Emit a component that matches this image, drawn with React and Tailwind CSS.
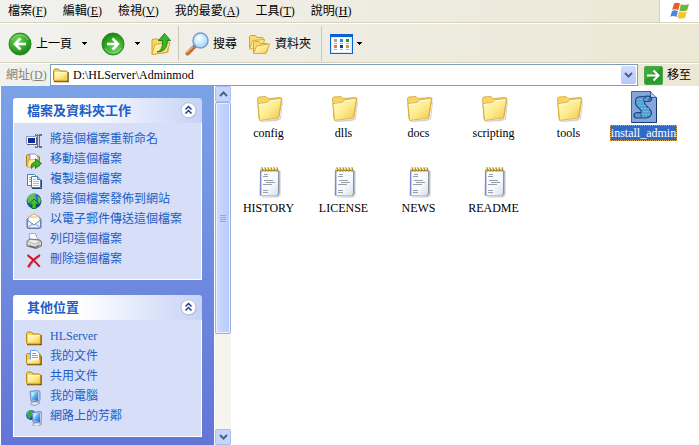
import { useState } from 'react';

const MENUS = [
  { label: '檔案', accel: 'F' },
  { label: '編輯', accel: 'E' },
  { label: '檢視', accel: 'V' },
  { label: '我的最愛', accel: 'A' },
  { label: '工具', accel: 'T' },
  { label: '說明', accel: 'H' },
];

const TASKS = [
  { label: '將這個檔案重新命名', Icon: RenameIcon },
  { label: '移動這個檔案', Icon: MoveIcon },
  { label: '複製這個檔案', Icon: CopyIcon },
  { label: '將這個檔案發佈到網站', Icon: PublishIcon },
  { label: '以電子郵件傳送這個檔案', Icon: MailIcon },
  { label: '列印這個檔案', Icon: PrintIcon },
  { label: '刪除這個檔案', Icon: DeleteIcon },
];

const PLACES = [
  { label: 'HLServer', Icon: SmallFolder },
  { label: '我的文件', Icon: DocumentsIcon },
  { label: '共用文件', Icon: SmallFolder },
  { label: '我的電腦', Icon: ComputerIcon },
  { label: '網路上的芳鄰', Icon: NetworkIcon },
];

const FILES = [
  { name: 'config', Icon: BigFolder },
  { name: 'dlls', Icon: BigFolder },
  { name: 'docs', Icon: BigFolder },
  { name: 'scripting', Icon: BigFolder },
  { name: 'tools', Icon: BigFolder },
  { name: 'install_admin', Icon: ScriptIcon },
  { name: 'HISTORY', Icon: TextIcon },
  { name: 'LICENSE', Icon: TextIcon },
  { name: 'NEWS', Icon: TextIcon },
  { name: 'README', Icon: TextIcon },
];

/* Shared gradients, referenced by id from the icons */
function Gradients() {
  return (
    <svg className="absolute h-0 w-0" aria-hidden="true">
      <defs>
        <radialGradient id="green" cx="40%" cy="30%" r="70%">
          <stop offset="0" stopColor="#6fd45c" />
          <stop offset="0.6" stopColor="#35ab28" />
          <stop offset="1" stopColor="#1c8418" />
        </radialGradient>
        <linearGradient id="folder" x1="0" y1="0" x2="1" y2="1">
          <stop offset="0" stopColor="#fffbc4" />
          <stop offset="0.5" stopColor="#fdec90" />
          <stop offset="1" stopColor="#f0c44a" />
        </linearGradient>
        <linearGradient id="screen" x1="0" y1="0" x2="1" y2="1">
          <stop offset="0" stopColor="#c8f0ff" />
          <stop offset="0.5" stopColor="#5cb4f4" />
          <stop offset="1" stopColor="#1c60cc" />
        </linearGradient>
        <radialGradient id="lens" cx="40%" cy="35%" r="65%">
          <stop offset="0" stopColor="#ffffff" />
          <stop offset="0.6" stopColor="#c6e9fb" />
          <stop offset="1" stopColor="#8ccaf2" />
        </radialGradient>
        <radialGradient id="globe" cx="35%" cy="30%" r="70%">
          <stop offset="0" stopColor="#8ed2ff" />
          <stop offset="0.5" stopColor="#2a72dc" />
          <stop offset="1" stopColor="#123a90" />
        </radialGradient>
        <linearGradient id="paper" x1="0" y1="0" x2="1" y2="1">
          <stop offset="0" stopColor="#ffffff" />
          <stop offset="0.6" stopColor="#f6f9fd" />
          <stop offset="1" stopColor="#cfdcec" />
        </linearGradient>
      </defs>
    </svg>
  );
}

function ArrowCircle({ flip }) {
  return (
    <svg width="24" height="24" viewBox="0 0 24 24" className={flip ? 'rotate-180' : ''}>
      <circle cx="12" cy="12" r="11" fill="url(#green)" stroke="#2b8a24" strokeWidth="1" />
      <path d="M4 8a9 9 0 0 1 16 0" fill="none" stroke="#9be58a" strokeWidth="1" opacity="0.7" />
      <path d="M12.500 6.500 7 12l5.500 5.500M7.500 12H18" fill="none" stroke="#fff" strokeWidth="2.600" />
    </svg>
  );
}

function UpFolderIcon() {
  return (
    <svg width="22" height="24" viewBox="0 0 22 24">
      <path d="M2 22.500V8l1-1h5l1.500 2H18v11Z" fill="#f7d965" stroke="#d2a02c" />
      <path d="m2 22.500 3-10 15-2-3 10Z" fill="url(#folder)" stroke="#d9a938" />
      <path d="M7 20c4-1 6-5 5.500-11.500H8.500L14.500 1.500l6 7h-3.500C18 15 14 20 7 20Z" fill="#3cb52e" stroke="#23801d" />
    </svg>
  );
}

function SearchIcon() {
  return (
    <svg width="24" height="24" viewBox="0 0 24 24">
      <path d="m2.500 21.500 7-7" stroke="#c06c34" strokeWidth="4" strokeLinecap="round" />
      <path d="m2 20.500 6.500-6.500" stroke="#f2ac74" strokeWidth="1.500" strokeLinecap="round" />
      <path d="m8.500 15.500 2-2" stroke="#6e7fa8" strokeWidth="3" />
      <circle cx="15.500" cy="8.500" r="7.500" fill="url(#lens)" stroke="#7b9bd8" strokeWidth="1.500" />
      <circle cx="15.500" cy="8.500" r="6" fill="none" stroke="#bfe3fa" />
    </svg>
  );
}

function FoldersIcon() {
  return (
    <svg width="24" height="24" viewBox="0 0 24 24">
      <path d="M2.500 16V4.500l1-1h5l1.500 2h6V15Z" fill="#f9dd72" stroke="#d8a232" />
      <path d="m2.500 17 3-8.500 12-1-2 9Z" fill="url(#folder)" stroke="#dba83a" />
      <path d="M6.500 21V10.500l1-1h4l1.500 2h7V20Z" fill="#f9dd72" stroke="#d8a232" />
      <path d="m6.500 21.500 3-7.500 13-2-3.500 9.500Z" fill="url(#folder)" stroke="#dba83a" />
    </svg>
  );
}

function ViewsIcon() {
  return (
    <svg width="23" height="20" viewBox="0 0 23 20" shapeRendering="crispEdges">
      <rect width="23" height="20" rx="1" fill="#0b62cf" />
      <rect x="1" y="3" width="21" height="16" fill="#d9edff" />
      <rect x="2" y="4" width="18" height="14" fill="#fff" />
      <path fill="#a4a0cc" d="M4 5h3v3H4z" />
      <path fill="#2a80e0" d="M10 5h3v3h-3z" />
      <path fill="#1c9c20" d="M16 5h3v3h-3z" />
      <path fill="#f07448" d="M4 11h3v3H4z" />
      <path fill="#0c3ca0" d="M10 11h3v3h-3z" />
      <path fill="#d0a020" d="M16 11h3v3h-3z" />
      <path d="M4 9.500h3m3 0h3m3 0h3M4 15.500h3m3 0h3m3 0h3" stroke="#b4b4b4" />
    </svg>
  );
}

function DropArrow() {
  return (
    <svg width="5" height="3" viewBox="0 0 5 3" shapeRendering="crispEdges">
      <path d="M0 0h5v1H4v1H3v1H2V2H1V1H0Z" fill="#000" />
    </svg>
  );
}

function WindowsFlag() {
  return (
    <svg width="20" height="18" viewBox="0 0 20 18">
      <path d="M4 1.500C6 .3 8 .5 10 1.600L8.300 8C6.500 7 4.300 6.800 2.200 8Z" fill="#ea5a2c" />
      <path d="M11 2c2 1.200 5 1.200 8 0l-1.800 6.300c-2.600 1.400-5.200 1.300-7.900.1Z" fill="#6fb53c" />
      <path d="M2 9c2.200-1.200 4.300-1 6 0l-1.600 6c-2-1.200-4-1.200-6.100-.2Z" fill="#4a87dc" />
      <path d="M9 9.300c2.700 1.300 5.300 1.300 7.900.1l-1.700 6c-2.600 1.700-5.200 1.500-7.800 0Z" fill="#f8c430" />
    </svg>
  );
}

function GoIcon() {
  return (
    <svg width="19" height="19" viewBox="0 0 19 19">
      <rect x=".5" y=".5" width="18" height="18" rx="1.500" fill="#2b9c2b" stroke="#47a847" />
      <path d="M1 1h17L1 14Z" fill="#50b64b" opacity=".5" />
      <path d="M3 9.500h11M9.500 4.500l5 5-5 5" fill="none" stroke="#fff" strokeWidth="2" />
    </svg>
  );
}

function Chevron({ up }) {
  return (
    <svg width="9" height="6" viewBox="0 0 9 6" className={up ? 'rotate-180' : ''}>
      <path d="m1 1 3.500 3.500L8 1" fill="none" stroke="#4d6185" strokeWidth="2" />
    </svg>
  );
}

function CollapseIcon() {
  return (
    <svg width="17" height="17" viewBox="0 0 17 17">
      <circle cx="9" cy="9" r="7.500" fill="#9aa9cc" opacity=".6" />
      <circle cx="8.500" cy="8.200" r="7.500" fill="#fff" stroke="#b4bfdc" />
      <path d="m5.500 7.500 3-3 3 3M5.500 11.500l3-3 3 3" fill="none" stroke="#223c86" strokeWidth="1.500" />
    </svg>
  );
}

function SmallFolder() {
  return (
    <svg width="16" height="16" viewBox="0 0 16 16">
      <path d="M1 14.500h14V5" fill="none" stroke="#6a4c08" strokeWidth="1.500" />
      <path d="M.500 13V3.500l1-1.500h4l1.500 2h6.500l1 1v8l-1 1h-12Z" fill="#f6d35e" stroke="#c08a18" />
      <path d="M2 6h11.500v6.500H2Z" fill="url(#folder)" />
      <path d="M2 5.500h11.500" stroke="#fffbd0" />
    </svg>
  );
}

function DocumentsIcon() {
  return (
    <svg width="16" height="16" viewBox="0 0 16 16">
      <path d="M1 14.500h14V6" fill="none" stroke="#6a4c08" strokeWidth="1.500" />
      <path d="M.500 13V4.500l1-1h12l1 1.500v8l-1 1h-12Z" fill="#f3cb54" stroke="#bd8715" />
      <path d="M4.500 11V.500h6l3 3V11Z" fill="#fff" stroke="#6ba5d4" />
      <path d="M6 3.500h4M6 5.500h6M6 7.500h6" stroke="#64b2ea" />
      <path d="M1.500 9.500h12v4h-12Z" fill="url(#folder)" />
    </svg>
  );
}

function Monitor() {
  return (
    <>
      <path d="M5 12.500 11 11l3 2-5 2.500-4-1Z" fill="#e4e5ee" stroke="#8b8fa8" strokeWidth=".8" />
      <path d="M4 1.500 12 .500l2 1v9l-2 1.500-7-1Z" fill="#b9c6e6" stroke="#6078b4" strokeWidth=".8" />
      <path d="m5 2.500 7-1v9.400l-6-1Z" fill="url(#screen)" />
      <path d="m5.600 3 4-.7-3.500 5Z" fill="#fff" opacity=".5" />
    </>
  );
}

function ComputerIcon() {
  return (
    <svg width="16" height="16" viewBox="0 0 16 16">
      <Monitor />
    </svg>
  );
}

function NetworkIcon() {
  return (
    <svg width="16" height="16" viewBox="0 0 16 16">
      <circle cx="5" cy="5" r="5" fill="url(#globe)" />
      <path d="M1 3c2-3 5-3 6-2L5 3l1 2-3 4C1 7 2 5 1 3Z" fill="#3aae34" />
      <g transform="translate(2 1)">
        <Monitor />
      </g>
    </svg>
  );
}

function RenameIcon() {
  return (
    <svg width="16" height="16" viewBox="0 0 16 16" shapeRendering="crispEdges">
      <path d="M1 4h10v8H1z" fill="#596071" />
      <path d="M0 3h10v8H0z" fill="#8f98ac" />
      <path d="M1 4h9v7H1z" fill="#f6f8ff" />
      <path d="M2 5h7v5H2z" fill="#0a2da4" />
      <path d="M9 1h3v1h1V1h3v2h-2v10h2v2h-3v-1h-1v1H9v-2h2V3H9Z" fill="#697186" />
      <path d="M12 3h1v10h-1zM10 1h1v1h-1zM10 13h1v1h-1z" fill="#cbd3e5" />
    </svg>
  );
}

function MoveIcon() {
  return (
    <svg width="16" height="16" viewBox="0 0 16 16">
      <path d="M.500 13V2.500l1-1h4l1 1.500h6l1 1v9Z" fill="#edc14e" stroke="#ab7a1c" />
      <path d="M4 7V1h5l3 3v5L5 10Z" fill="#fff" stroke="#879cc0" />
      <path d="m1 14 2-7 9-1-1 8Z" fill="url(#folder)" stroke="#c0902c" strokeWidth=".6" />
      <path d="M5.500 15.500c-1-4 1-6.500 4-6.500V6l6 4.500-6 5v-3c-2 0-3 1-4 3Z" fill="#35b52c" stroke="#17701a" strokeWidth=".8" />
    </svg>
  );
}

function CopyIcon() {
  return (
    <svg width="16" height="16" viewBox="0 0 16 16">
      <path d="M1.500 12.500V1.500h7l2 2v9Z" fill="#fff" stroke="#4981b0" />
      <path d="M3 4.500h3M3 6.500h2M3 8.500h2" stroke="#77b5df" />
      <path d="M15.500 7v8.500H6" fill="none" stroke="#1c4468" />
      <path d="M5.500 14.500v-11h6l3 3v8Z" fill="#fff" stroke="#4981b0" />
      <path d="M11.500 3.500v3h3" fill="#aadcf8" stroke="#4981b0" />
      <path d="M7 6.500h3M7 8.500h6M7 10.500h6M7 12.500h6" stroke="#8cc6ea" />
    </svg>
  );
}

function PublishIcon() {
  return (
    <svg width="16" height="16" viewBox="0 0 16 16">
      <circle cx="8" cy="8" r="7.500" fill="url(#globe)" />
      <path d="M2 4c3-4 6-4 8-3L8 3l1 3-3 2-1 4-3-3ZM12 3l3 3-1 5-2-2Z" fill="#60c248" />
      <path d="m8 6 5.500 5H10v4.500H6V11H2.500Z" fill="#3bc52b" stroke="#126417" strokeWidth=".8" />
    </svg>
  );
}

function MailIcon() {
  return (
    <svg width="16" height="16" viewBox="0 0 16 16">
      <path d="m1 6 7-5 7 5v8.500l-1 1H2l-1-1Z" fill="#c5d9f2" stroke="#5e7aa8" />
      <path d="M3 9V4h10v5l-5 4Z" fill="#fffdf0" />
      <path d="m2 4 6-3 6 3H2Z" fill="#fff" stroke="#deb46b" />
      <path d="m1.500 7 6.500 5 6.500-5v8h-13Z" fill="#e6f0fc" stroke="#6985b2" />
      <path d="m2 14.500 5-4M14 14.500l-5-4" stroke="#839dc4" />
    </svg>
  );
}

function PrintIcon() {
  return (
    <svg width="16" height="16" viewBox="0 0 16 16">
      <path d="M4 8 3 1l6-1 3 7Z" fill="#fff" stroke="#94a6cb" />
      <path d="m1 8 3-2 10 1 1.500 2v4L10 15.500 1 13Z" fill="#bdbdba" stroke="#777" />
      <path d="m2 8 3-1 8 1-4 2.500Z" fill="#f0f0ec" />
      <path d="m1.500 10 8 2.500 5.500-2.500" fill="none" stroke="#f4f4f2" />
      <path d="m3 13 6 1.500 4-2" fill="none" stroke="#555" />
      <path d="M12 12h2" stroke="#8ab058" strokeWidth="1.200" />
    </svg>
  );
}

function DeleteIcon() {
  return (
    <svg width="16" height="16" viewBox="0 0 16 16">
      <path d="M2 3c4 2 8 7 12 11M14 3C9 6 5 10 3 15" fill="none" stroke="#7a1d2a" strokeWidth="2" opacity=".4" />
      <path d="M1.500 2C6 5 10 9 13.500 13.500M14 2C9 5 4.500 9.500 2 14" fill="none" stroke="#d80f20" strokeWidth="1.800" />
    </svg>
  );
}

function BigFolder() {
  return (
    <svg width="32" height="32" viewBox="0 0 32 32">
      <path d="m7 30 17-2 3-1 2.500-17 .5 1-2 17-4 2-15 1Z" fill="#6b6b6b" opacity=".3" />
      <path d="M6 28 4.500 8l1-2 7.500-.5 2 2 12.500-1 1.500 1L26 26Z" fill="#f5d566" stroke="#d0a53a" strokeWidth=".8" />
      <path d="M6.500 29.500 5 12.500l9-.8 3-3 11.500-1-3 19.300Z" fill="url(#folder)" stroke="#d5a93a" strokeWidth=".8" />
      <path d="m5.800 13.500 8.700-.8 3-3 10-.8" fill="none" stroke="#fffde0" />
    </svg>
  );
}

function TextIcon() {
  return (
    <svg width="32" height="32" viewBox="0 0 32 32">
      <path d="M27 5v24l-2 2H9" fill="none" stroke="#888" strokeWidth="1.200" opacity=".4" />
      <path d="M7.500 3.500 26 4v23.500L24.500 30 7 29.500Z" fill="url(#paper)" stroke="#9aa4c0" strokeWidth=".8" />
      <path d="M7.700 5v24" stroke="#8486d0" strokeWidth="1.400" />
      <path d="M25.700 5v22.500L24 29.500" fill="none" stroke="#7c8792" />
      <path d="M11 8.500h4M10 10.500h5M11 14.500h9M13 16.500h9M10 18.500h9M10 24.500h5M10 26.500h5" stroke="#8b949c" strokeWidth=".9" />
      <path d="M8 4.500h17" stroke="#8e7a30" strokeWidth="1.200" />
      <path d="M9 1.500v4m3-4v4m3-4v4m3-4v4m3-4v4m3-4v4" stroke="#a08828" strokeWidth="1.800" />
      <path d="M8.500 1.500v3m3-3v3m3-3v3m3-3v3m3-3v3m3-3v3" stroke="#ecd060" strokeWidth="1.200" />
    </svg>
  );
}

function ScriptIcon() {
  return (
    <svg width="32" height="32" viewBox="0 0 32 32">
      <path d="M3.500 31.500V.500h19l6 6v25Z" fill="#84a6da" stroke="#3a62a4" />
      <path d="M22.500.500v6h6" fill="#a9c6ec" stroke="#315a9a" />
      <path d="M28.500 7v24.500h-25" fill="none" stroke="#173b70" />
      <path d="M10 6 20 5c4 0 5 5 1 5.500h-4.500c-1 4 7 7 7 11.500-.5 4-3 5-7 5H9c-4 0-4-5 0-5.500h4c2-3-6-5-5.500-10C7.500 8 8.500 6.500 10 6Z" fill="#5f9bd2" stroke="#1a4680" strokeWidth="1.200" />
      <path d="M9 8.500h7M8.500 11.500h7M9.500 14.500h8M13 17.500h8M15 20.500h7M14 23.500h8" stroke="#4fd0ee" strokeWidth="1.200" strokeDasharray="2 1" />
      <path d="M18 6c-3 1-3 4-1 5m4-5c2 1 1 3-1 3M9 22c4-1 6 2 3 4.500" fill="none" stroke="#1a4680" />
    </svg>
  );
}

function TaskPanel({ title, items }) {
  const [open, setOpen] = useState(true);

  return (
    <section>
      <div className="flex h-[25px] items-center justify-between rounded-t-[3px] bg-linear-to-r from-white from-35% to-[#c6d3f7] pr-[5px] pl-3.5">
        <h2 className="text-[13px] leading-5 font-bold text-[#215dc6]">{title}</h2>
        <button onClick={() => setOpen(!open)} aria-expanded={open} aria-label={title}>
          <CollapseIcon />
        </button>
      </div>
      {open && (
        <ul className="border border-t-0 border-white bg-[#d6dff7] pt-1.5 pb-2.5 pl-3">
          {items.map(({ label, Icon }) => (
            <li key={label}>
              <a href="#" className="flex h-5 items-center gap-2 text-[#215dc6] hover:underline">
                <span className="shrink-0 pt-1">
                  <Icon />
                </span>
                {label}
              </a>
            </li>
          ))}
        </ul>
      )}
    </section>
  );
}

function ScrollBar() {
  return (
    <div className="flex w-[17px] shrink-0 flex-col border-l border-white bg-[#f5f4ee]">
      <button
        aria-label="向上捲動"
        className="flex h-4 shrink-0 items-center justify-center rounded-[2px] border border-[#a9bff0] bg-[#c6d5fc]"
      >
        <Chevron up />
      </button>
      <div className="flex min-h-0 flex-1 flex-col">
        <div className="flex h-[71%] flex-col items-center justify-center gap-px rounded-[2px] border border-[#98b0e4] bg-linear-to-r from-[#cddbfe] to-[#b7cafb] shadow-[inset_0_0_0_1px_#e8efff]">
          <span className="h-px w-1.5 bg-[#8ca9ee]" />
          <span className="h-px w-1.5 bg-[#8ca9ee]" />
          <span className="h-px w-1.5 bg-[#8ca9ee]" />
          <span className="h-px w-1.5 bg-[#8ca9ee]" />
        </div>
      </div>
      <button
        aria-label="向下捲動"
        className="flex h-4 shrink-0 items-center justify-center rounded-[2px] border border-[#a9bff0] bg-[#c6d5fc]"
      >
        <Chevron />
      </button>
    </div>
  );
}

export default function App() {
  const [address, setAddress] = useState('D:\\HLServer\\Adminmod');
  const [selected, setSelected] = useState('install_admin');

  return (
    <div className="flex h-screen w-full flex-col overflow-hidden bg-linear-to-r from-[#f1f1ee] to-[#ece8d6] font-['Liberation_Serif','Noto_Sans_CJK_TC',serif] text-[12px] leading-4 text-black">
      <Gradients />

      {/* Menu bar */}
      <div className="flex h-6 shrink-0 border-b border-white">
        <nav className="flex flex-1 items-center gap-4 border-b border-[#d8d2bd] pl-2">
          {MENUS.map(({ label, accel }) => (
            <button key={label} className="whitespace-nowrap">
              {label}(<u>{accel}</u>)
            </button>
          ))}
        </nav>
        <div className="flex w-10 items-center justify-center border-b border-l border-[#d8d2bd] bg-white">
          <WindowsFlag />
        </div>
      </div>

      {/* Toolbar */}
      <div className="flex h-10 shrink-0 items-center border-b border-white shadow-[inset_0_-1px_0_#d8d2bd]">
        <button className="flex items-center gap-1 pl-2">
          <ArrowCircle />
          上一頁
        </button>
        <button className="px-2.5" aria-label="上一頁清單">
          <DropArrow />
        </button>
        <button className="pl-1" aria-label="下一頁">
          <ArrowCircle flip />
        </button>
        <button className="px-2.5" aria-label="下一頁清單">
          <DropArrow />
        </button>
        <button className="pr-1.5" aria-label="上一層">
          <UpFolderIcon />
        </button>
        <span className="h-[35px] w-px bg-[#cdc8b2]" />
        <button className="flex items-center gap-1 pl-1.5">
          <SearchIcon />
          搜尋
        </button>
        <button className="flex items-center gap-1 px-2.5">
          <FoldersIcon />
          資料夾
        </button>
        <span className="h-[35px] w-px bg-[#cdc8b2]" />
        <button className="flex items-center gap-1 pl-2" aria-label="檢視方式">
          <ViewsIcon />
          <DropArrow />
        </button>
      </div>

      {/* Address bar */}
      <div className="flex h-[22px] shrink-0 items-center">
        <label htmlFor="address" className="w-[50px] shrink-0 pl-1.5 whitespace-nowrap text-[#85826f]">
          網址(<u>D</u>)
        </label>
        <div className="flex h-full min-w-0 flex-1 items-center border border-[#7f9db9] bg-white pr-px pl-0.5">
          <SmallFolder />
          <input
            id="address"
            value={address}
            onChange={(e) => setAddress(e.target.value)}
            className="min-w-0 flex-1 pl-1 outline-none"
          />
          <button
            aria-label="網址清單"
            className="flex h-[18px] w-[15px] items-center justify-center rounded-[2px] bg-linear-to-b from-[#d2defe] to-[#b5c8fa]"
          >
            <Chevron />
          </button>
        </div>
        <button className="flex shrink-0 items-center gap-1 pr-2 pl-1.5 whitespace-nowrap">
          <GoIcon />
          移至
        </button>
      </div>

      <div className="flex min-h-0 flex-1 bg-white pl-px">
        {/* Task pane */}
        <aside className="flex w-[213px] shrink-0 flex-col gap-[15px] overflow-hidden bg-linear-to-b from-[#7ba2e7] to-[#6375d6] px-3 pt-3">
          <TaskPanel title="檔案及資料夾工作" items={TASKS} />
          <TaskPanel title="其他位置" items={PLACES} />
        </aside>
        <ScrollBar />

        {/* Files */}
        <main className="grid min-w-0 flex-1 auto-rows-[75px] grid-cols-[repeat(auto-fill,75px)] content-start pt-[5px]">
          {FILES.map(({ name, Icon }) => (
            <button key={name} onClick={() => setSelected(name)} className="flex flex-col items-center gap-0.5">
              <Icon />
              <span
                className={
                  selected === name
                    ? 'border border-dotted border-[#e0a040] bg-[#316ac5] leading-[14px] text-white'
                    : 'px-0.5'
                }
              >
                {name}
              </span>
            </button>
          ))}
        </main>
      </div>
    </div>
  );
}
